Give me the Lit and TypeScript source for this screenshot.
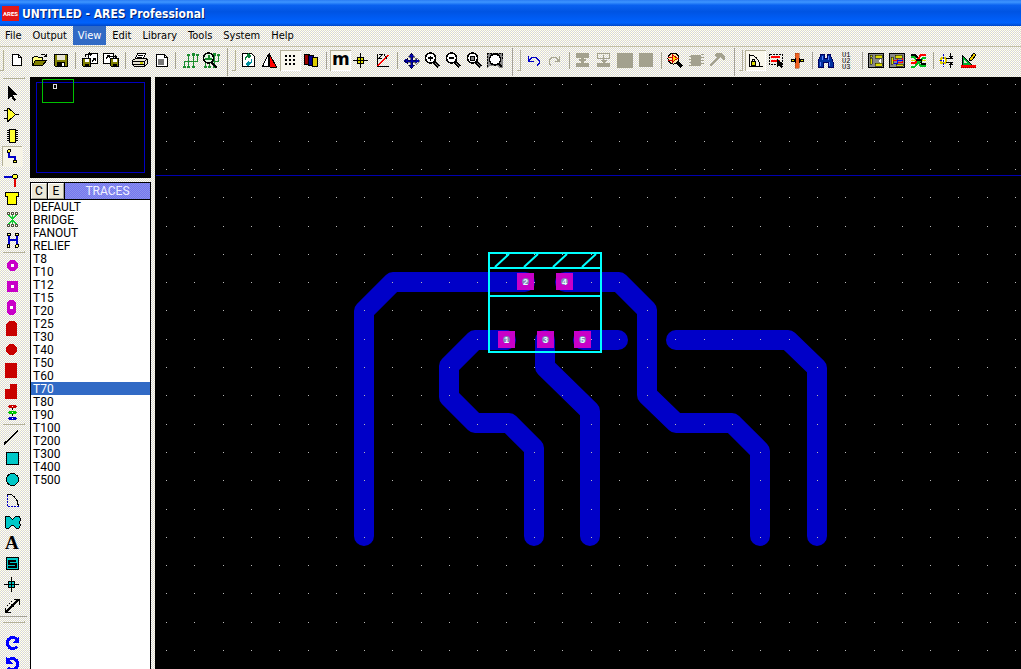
import { LitElement, html, css, svg, TemplateResult, SVGTemplateResult } from "lit";
import { customElement, property, state } from "lit/decorators.js";
import { classMap } from "lit/directives/class-map.js";

type Shape = SVGTemplateResult;
interface Tool { name: string; art: Shape; on?: boolean }

const K = "#000";
const OLIVE = "#808000";

const zoomLens = (mark: Shape): Shape => svg`
  <path d="M12 12l5 5" stroke="${K}" stroke-width="3"/><path d="M13 13l4 4" stroke="#888" stroke-width="1"/>
  <circle cx="8.500" cy="8" r="5" fill="#fff" stroke="${K}" stroke-width="1.500"/>${mark}`;

const floppy = (x: number, y: number): Shape => svg`
  <path d="M${x} ${y}h8v8h-7l-1-1z" fill="${OLIVE}" stroke="${K}"/>
  <path d="M${x + 2} ${y}h4v3h-4z" fill="#fff"/><path d="M${x + 2} ${y + 5}h4v3h-4z" fill="${K}"/>`;

const fileTools: Tool[] = [
  { name: "New", art: svg`<path d="M4.500 4.500h6l3 3v8h-9z" fill="#fff" stroke="${K}"/><path d="M10.500 4.500v3h3" fill="none" stroke="${K}"/>` },
  { name: "Open", art: svg`<path d="M3.500 15.500v-8h1l1-1h3l1 1h4v3" fill="#ffff80" stroke="${K}"/><path d="M3.500 15.500l3-5h11l-4 5z" fill="${OLIVE}" stroke="${K}"/><path d="M11.500 5.500l1-1h3l2 2m0-3v3h-3" fill="none" stroke="${K}"/>` },
  { name: "Save", art: svg`<path d="M4.500 4.500h13v12h-12l-1-1z" fill="${OLIVE}" stroke="${K}"/><path d="M7 5h8v5h-8z" fill="#e8e4d4"/><path d="M7 12h8v4h-8z" fill="${K}"/><path d="M12 13h2v3h-2z" fill="#fff"/>` },
];
const regionTools: Tool[] = [
  { name: "Import region", art: svg`<path d="M9.500 3.500h9v10h-9z" fill="#fff" stroke="${K}"/>${floppy(3.5, 8.5)}<path d="M6.500 7v-2.500h6m-2-2l2 2-2 2M13 11.500l3-3m-2 0h2v2" fill="none" stroke="${K}"/>` },
  { name: "Export region", art: svg`<path d="M3.500 3.500h10v10h-10z" fill="#fff" stroke="${K}"/>${floppy(10.5, 8.5)}<path d="M6 8.500l3-3m-2 0h2v2M10 6.500h5v2m0-3l2 2" fill="none" stroke="${K}"/>` },
];
const printTools: Tool[] = [
  { name: "Print", art: svg`<path d="M6.500 8.500l2-5h8l-2 5z" fill="#fff" stroke="${K}"/><path d="M9 5.500h5M8 7.500h5" stroke="${K}"/><path d="M3.500 10.500l3-2h10l2 1v4l-3 3h-10l-2-2z" fill="#e8e4d4" stroke="${K}"/><path d="M4 11.500h11l3-2M4 14.500h11v2M15.500 11v4" fill="none" stroke="${K}"/><path d="M11 13h3" stroke="#cc0" stroke-width="2"/>` },
  { name: "Print area", art: svg`<path d="M6.500 4.500h8l3 3v9h-11z" fill="#fff" stroke="${K}"/><path d="M14.500 4.500v3h3" fill="none" stroke="${K}"/><path d="M8 9h6v6h-6z" fill="#777"/>` },
];
const tree = svg`<path d="M5.500 17v-6h13M5.500 12v-1M9.500 11v6M14.500 4v13M9.500 5v6M18.500 5v6" fill="none" stroke="#1a8c2e"/><path d="M4 16h3v2h-3zM8 16h3v2h-3zM13 16h3v2h-3zM13 3h3v3h-3zM8 4h3v2h-3zM17 4h3v2h-3z" fill="#1a8c2e"/>`;
const netTools: Tool[] = [
  { name: "Netlist", art: tree },
  { name: "Find net", art: svg`<g>${tree}</g><path d="M11 12l6 6" stroke="${K}" stroke-width="2"/><circle cx="8.500" cy="8" r="5" fill="#dff5df" stroke="${K}" stroke-width="1.500"/><path d="M5 8.500h7M8.500 5v3" stroke="#1a8c2e" stroke-width="2"/>` },
];
const viewTools: Tool[] = [
  { name: "Redraw", art: svg`<path d="M4.500 3.500h9l3 3v10h-12z" fill="#fff" stroke="${K}"/><path d="M7.500 10v-2l2-2h2M10 4l2 2-2 2" fill="none" stroke="#08803a" stroke-width="1.500"/><path d="M13.500 9v3l-2 2h-2M11 12l-2 2 2 2" fill="none" stroke="#0090a0" stroke-width="1.500"/>` },
  { name: "Flip", art: svg`<path d="M9.500 4v12.500h-6z" fill="#fff" stroke="${K}"/><path d="M11 5v12h6z" fill="#f00"/><path d="M10.500 3v14M11 5l6.500 12h-7" fill="none" stroke="${K}"/>` },
  { name: "Grid", on: true, art: svg`<path d="M5 5h2v2h-2zM9 5h2v2h-2zM13 5h2v2h-2zM5 9h2v2h-2zM9 9h2v2h-2zM13 9h2v2h-2zM5 13h2v2h-2zM9 13h2v2h-2zM13 13h2v2h-2z" fill="${K}"/>` },
  { name: "Layers", art: svg`<path d="M3.500 4.500h5v10h-5z" fill="#900" stroke="${K}"/><path d="M7.500 5.500h5v10h-5z" fill="#00008c" stroke="${K}"/><path d="M11.500 7.500h5v9h-5z" fill="#dc0" stroke="${K}"/>` },
];
const unitTools: Tool[] = [
  { name: "Metric", on: true, art: svg`<text x="2" y="15" class="metric">m</text>` },
  { name: "Origin", art: svg`<path d="M9.500 3v15M2 10.500h15" stroke="${K}"/><path d="M6.500 7.500h6v6h-6z" fill="#dd0" stroke="${K}"/><path d="M9.500 7v7M6 10.500h7" stroke="${K}"/>` },
  { name: "Polar", art: svg`<path d="M5.500 4v12.500h11" fill="none" stroke="${K}"/><path d="M6 16l10-11" stroke="#f00" stroke-width="1.500"/><path d="M7 4.500h3l-3 4h3M12 4.500l3 4" fill="none" stroke="${K}"/>` },
];
const zoomTools: Tool[] = [
  { name: "Pan", art: svg`<path d="M10.500 3l3 4h-2v3h3v-2l4 3-4 3v-2h-3v3h2l-3 4-3-4h2v-3h-3v2l-4-3 4-3v2h3v-3h-2z" fill="#0000a8" stroke="${K}" stroke-width=".5"/>` },
  { name: "Zoom in", art: zoomLens(svg`<path d="M6 8h5M8.500 5.500v5" stroke="${K}" stroke-width="1.500"/>`) },
  { name: "Zoom out", art: zoomLens(svg`<path d="M6 8h5" stroke="${K}" stroke-width="2"/>`) },
  { name: "Zoom all", art: zoomLens(svg`<path d="M6.500 6h4v4h-4z" fill="#888" stroke="${K}"/>`) },
  { name: "Zoom area", art: svg`<path d="M2 3h16v15h-4l-2-2h-7l-3 2z" fill="#888"/><path d="M2 3.500h16M2.500 3v14M17.500 4v6" stroke="${K}" stroke-dasharray="2 1" fill="none"/><path d="M13 13l4 4" stroke="${K}" stroke-width="2"/><circle cx="10" cy="9.500" r="5.500" fill="#fff" stroke="${K}" stroke-width="1.500"/>` },
];
const undoTools: Tool[] = [
  { name: "Undo", art: svg`<path d="M5.500 6v5h5M6 10.500l3-3h4l3 3v3l-2 2" fill="none" stroke="#0000c8"/><path d="M5 8h1v3h3v1h-4z" fill="#0000c8"/>` },
  { name: "Redo", art: svg`<path d="M15.500 6v5h-5M15 10.500l-3-3h-4l-3 3v3l2 2" fill="none" stroke="#a8a694"/><path d="M13 11h3v-3h-1v2h-2z" fill="#a8a694"/>` },
];
const G = "#a3a18e";
const blockTools: Tool[] = [
  { name: "Block copy", art: svg`<path d="M3 3h13v5h-5v5h5v4h-13v-4h5v-5h-5z" fill="${G}"/><path d="M6 10h7" stroke="${G}" stroke-width="2"/>` },
  { name: "Block move", art: svg`<path d="M3.500 3.500h12v5h-12z" fill="none" stroke="${G}"/><path d="M9 5h1v5h3l-3 3h6v4h-13v-4h6l-3-3h3z" fill="${G}"/>` },
  { name: "Block rotate", art: svg`<path d="M2 3h16v15h-16z" fill="${G}"/>` },
  { name: "Block delete", art: svg`<path d="M3 3h14v14h-14z" fill="${G}"/>` },
];
const pickTools: Tool[] = [
  { name: "Pick parts", art: svg`<path d="M12 12l5 5" stroke="${K}" stroke-width="3"/><circle cx="8.500" cy="8.500" r="5.500" fill="#ffe8a0" stroke="${K}"/><path d="M7.500 5v7l5-3.500z" fill="#fd0" stroke="#c00"/><path d="M3 7.500h4M3 10.500h4M12 8.500h2" stroke="#c00"/>` },
  { name: "Make package", art: svg`<path d="M5 5h10v11h-10zM3 6h2v1h-2zM3 9h2v1h-2zM3 12h2v1h-2zM3 15h2v1h-2zM15 4h3v1h-3zM15 7h3v1h-3zM15 10h3v1h-3zM15 13h3v1h-3z" fill="${G}"/>` },
  { name: "Decompose", art: svg`<path d="M3 16l9-9" stroke="${G}" stroke-width="2"/><path d="M7 4l3-1h4l4 4v3h-2l-3-3-3 1-2-3z" fill="${G}"/>` },
];
const lockTools: Tool[] = [
  { name: "Trace angle lock", on: true, art: svg`<path d="M4.500 4v12.500h13M5 5.500h3l3 2 3 4 1 5" fill="none" stroke="${K}"/><path d="M6.500 11.500h4v4h-4z" fill="#dd0" stroke="${K}"/><path d="M7.500 11v-2h2v2" fill="none" stroke="${K}"/>` },
  { name: "Trace style", art: svg`<path d="M3.500 4.500h13v10h-13z" fill="none" stroke="${K}" stroke-dasharray="2 1"/><path d="M5 6h9v2h-9zM5 10h9v2h-9z" fill="#f00"/><path d="M11 9v8l2-2 2 3 2-1-2-3h3z" fill="${K}"/>` },
  { name: "Auto neck", art: svg`<path d="M8 3h4v15h-4z" fill="#f06020" stroke="#a04010" stroke-width=".5"/><path d="M4 9.500h3v2h-3zM13 9.500h3v2h-3z" fill="#dd0" stroke="${K}"/><path d="M8 8v5M12 8v5" stroke="${K}"/>` },
];
const searchTools: Tool[] = [
  { name: "Search", art: svg`<path d="M5 4h3v4h3v-4h3l3 8v5h-5v-5h-5v5h-5v-5z" fill="#0030a0" stroke="#000060"/><path d="M4 12v4M13 12v4M6 6v4M12 6v4" stroke="#6080ff"/>` },
  { name: "Annotate", art: svg`<g class="tiny"><text x="5" y="7">U1</text><text x="5" y="13">U2</text><text x="5" y="19">U3</text></g>` },
];
const board = svg`<path d="M2.500 3.500h15v14h-15z" fill="#888" stroke="${K}"/>`;
const routeTools: Tool[] = [
  { name: "Auto placer", art: svg`${board}<path d="M4 5h2v2h-2zM4 8h2v6h-2zM9 5h7v3h-7zM9 13h7v3h-7z" fill="#dd0" stroke="${K}" stroke-width=".5"/><path d="M12 11l3-2v4z" fill="#fff"/>` },
  { name: "Auto router", art: svg`${board}<path d="M4 7h2v7h-2zM8 5h7v3h-7zM9 14h7v2h-7z" fill="#dd0" stroke="${K}" stroke-width=".5"/><path d="M6 10.500h4v-2M10 12.500h5v-5" fill="none" stroke="#f00"/><path d="M7 13.500h3v-3h6" fill="none" stroke="#00f"/>` },
  { name: "Connectivity", art: svg`<path d="M3 4.500h4l7 9h4" fill="none" stroke="${K}" stroke-width="2"/><path d="M3 7h3l7 9h5" fill="none" stroke="#00c020" stroke-width="2"/><path d="M3 13h4l6-8h5" fill="none" stroke="#f00" stroke-width="2"/><path d="M3 16.500h4l8-9h3" fill="none" stroke="#00c020" stroke-width="2"/><path d="M3 10.500h5M13 10.500h5" stroke="#dd0"/><path d="M8 10h6" stroke="${K}" stroke-width="2"/>` },
];
const checkTools: Tool[] = [
  { name: "Design rules", art: svg`<circle cx="6.500" cy="10.500" r="3" fill="#fff" stroke="#dc0" stroke-width="2"/><path d="M6.500 4v13M3 10.500h3" stroke="#0000c8" stroke-dasharray="2 1"/><path d="M9 8.500h7M9 12.500h7M13.500 3v5M13.500 13v5" stroke="${K}"/><path d="M11 6h5l-2.500 2.500zM11 15h5l-2.500-2.500z" fill="${K}"/>` },
  { name: "Edit layout", art: svg`<path d="M4 5v10h10z" fill="#00b030" stroke="${K}"/><path d="M6 10v3h3z" fill="#e8e4d4"/><path d="M11 11l1-3 4-5 2 2-4 5z" fill="#ec0" stroke="${K}"/><path d="M3 15h15v3h-15z" fill="#f00"/><path d="M3 17.500h15" stroke="#900" stroke-dasharray="1 1"/>` },
];

const bands: Tool[][][] = [
  [fileTools, regionTools, printTools, netTools],
  [viewTools, unitTools, zoomTools],
  [undoTools, blockTools, pickTools],
  [lockTools, searchTools, routeTools, checkTools],
];

const M = "#c800c8";
const R = "#c80000";
const C = "#00c8c8";
const hole = svg`<path d="M11 9h3v3h-3z" fill="#fff"/>`;
const modes: Tool[][] = [
  [
    { name: "Selection", art: svg`<path d="M8 3v13l3-3 3 5 2-1-3-5h4z" fill="${K}"/>` },
    { name: "Component", art: svg`<path d="M7.500 4v13h1l7-6.500-7-6.500z" fill="#ff3" stroke="${K}"/><path d="M4 6.500h3M4 14.500h3M15 10.500h4" stroke="${K}"/>` },
    { name: "Package", art: svg`<path d="M7 5.500h2M7 7.500h2M7 9.500h2M7 11.500h2M7 13.500h2M7 15.500h2M16 5.500h2M16 7.500h2M16 9.500h2M16 11.500h2M16 13.500h2M16 15.500h2" stroke="${K}"/><path d="M9.500 4.500h6v13h-6z" fill="#ff3" stroke="${K}"/>` },
    { name: "Track", on: true, art: svg`<path d="M9 6v5h6v4" fill="none" stroke="#0000c8" stroke-width="2"/><circle cx="9" cy="5" r="1.500" fill="#ff3" stroke="${K}"/><circle cx="15" cy="15.500" r="1.500" fill="#ff3" stroke="${K}"/>` },
    { name: "Via", art: svg`<path d="M4 10h9" stroke="#0000c8" stroke-width="2"/><path d="M15 12v8" stroke="#e00000" stroke-width="2"/><circle cx="15" cy="9.500" r="2.500" fill="#ff3" stroke="${K}"/>` },
    { name: "Zone", art: svg`<path d="M5.500 4.500h13v4h-2v8h-9v-8h-2z" fill="#ff0" stroke="${K}"/>` },
    { name: "Ratsnest", art: svg`<path d="M8 5l4.500 5 4.500-5M8 16l4.500-5 4.500 5M12.500 5v11" stroke="#1c3" stroke-width="1.500"/><path d="M7 3h3v3h-3zM11 3h3v3h-3zM15 3h3v3h-3zM7 15h3v3h-3zM11 15h3v3h-3zM15 15h3v3h-3z" fill="#554"/><path d="M8 4h1v1h-1zM12 4h1v1h-1zM16 4h1v1h-1zM8 16h1v1h-1zM12 16h1v1h-1zM16 16h1v1h-1z" fill="#fff"/>` },
    { name: "Highlight", art: svg`<path d="M9 5v11M17 5v11M9 10h8" fill="none" stroke="#0000c8" stroke-width="2"/><circle cx="9" cy="4.500" r="1.500" fill="#ff8" stroke="${K}"/><circle cx="17" cy="4.500" r="1.500" fill="#ff8" stroke="${K}"/><circle cx="8.500" cy="16" r="1.500" fill="#ff8" stroke="${K}"/><circle cx="17" cy="16" r="1.500" fill="#ff8" stroke="${K}"/>` },
  ],
  [
    { name: "Round pad", art: svg`<circle cx="12.500" cy="10.500" r="5.500" fill="${M}"/>${hole}` },
    { name: "Square pad", art: svg`<path d="M7 5h11v11h-11z" fill="${M}"/>${hole}` },
    { name: "Oval pad", art: svg`<rect x="7" y="3" width="9" height="15" rx="4" fill="${M}"/><path d="M10 9h3v3h-3z" fill="#fff"/>` },
    { name: "Edge pad", art: svg`<path d="M6 18v-12l3-3h5l3 3v12z" fill="${R}"/>` },
    { name: "SMD round", art: svg`<circle cx="11.500" cy="10.500" r="5.500" fill="${R}"/>` },
    { name: "SMD rectangle", art: svg`<path d="M5 3h12v15h-12z" fill="${R}"/>` },
    { name: "SMD polygon", art: svg`<path d="M5 8h5v-5h7v15h-12z" fill="${R}"/>` },
    { name: "Padstack", art: svg`<path d="M12.500 3v14" stroke="${K}" stroke-dasharray="2 1"/><ellipse cx="12.500" cy="4.500" rx="4.500" ry="1.500" fill="${R}"/><ellipse cx="12.500" cy="10.500" rx="4.500" ry="1.500" fill="#00c800"/><ellipse cx="12.500" cy="16.500" rx="4.500" ry="1.500" fill="#0000c8"/><path d="M12 4.500h1M12 10.500h1M12 16.500h1" stroke="#fff"/>` },
  ],
  [
    { name: "Line", art: svg`<path d="M4 17L18 3.500" stroke="${K}" stroke-width="1.500"/>` },
    { name: "Box", art: svg`<path d="M6.500 4.500h12v12h-12z" fill="${C}" stroke="${K}"/>` },
    { name: "Circle", art: svg`<circle cx="12.500" cy="10.500" r="6" fill="${C}" stroke="${K}"/>` },
    { name: "Arc", art: svg`<path d="M7.500 5v11.500h11" fill="none" stroke="#0000c8" stroke-dasharray="2 1"/><path d="M7 4.500h4l3 2 3 4 1.500 6" fill="none" stroke="${K}"/>` },
    { name: "Path", art: svg`<path d="M6 5h3l3 3h1l3-3h3l1 2v3l-1 1 1 2v2l-1 2h-3l-3-3h-1l-3 3h-3l-1-2v-2l1-2-1-1v-3z" fill="${C}" stroke="${K}"/>` },
    { name: "Text", art: svg`<text x="5" y="17" class="serif">A</text>` },
    { name: "Symbol", art: svg`<path d="M6.500 4.500h12v12h-12z" fill="${C}" stroke="${K}"/><path d="M16 7.500h-7v3h7v3.500h-8" fill="none" stroke="${K}" stroke-width="2"/>` },
    { name: "Marker", art: svg`<path d="M8.500 7.500h6v6h-6z" fill="${C}" stroke="${K}"/><path d="M11.500 3v15M4 10.500h15" stroke="${K}"/>` },
    { name: "Dimension", art: svg`<path d="M5.500 17.500l13-13" stroke="${K}" stroke-width="1.500"/><path d="M5.500 13v4.500h5M14 4.500h5v5" fill="none" stroke="${K}"/><path d="M11 9h3v3h-3z" fill="${K}"/><path d="M7 11l5-5" stroke="${K}" stroke-dasharray="1 2"/>` },
  ],
];
const rotates: Tool[] = [
  { name: "Rotate clockwise", art: svg`<path d="M17 14.500a5.500 5.500 0 1 1-.500-7.500" fill="none" stroke="#00f" stroke-width="3"/><path d="M19 4v7h-7z" fill="#00f"/>` },
  { name: "Rotate anticlockwise", art: svg`<path d="M8 14.500a5.500 5.500 0 1 0 .500-7.500" fill="none" stroke="#00f" stroke-width="3"/><path d="M6 4v7h7z" fill="#00f"/>` },
];

const iconStyles = css`
  button { font: inherit; padding: 0; margin: 0; border: 0; background: none; color: inherit; }
  .tool { display: block; flex: none; width: 21px; height: 21px; }
  .tool.on { background: #f9f7ec; box-shadow: inset 1px 1px #b4b197, inset -1px -1px #fff; }
  .tool svg { display: block; width: 21px; height: 21px; overflow: visible; shape-rendering: crispEdges; }
  .tool text { fill: #000; }
  .metric { font: bold 17px "DejaVu Sans", sans-serif; }
  .serif { font: bold 19px "Liberation Serif", serif; }
  .tiny { font: 7px "Liberation Mono", monospace; }
`;

const toolButton = (t: Tool): TemplateResult => html`
  <button class=${classMap({ tool: true, on: !!t.on })} title=${t.name} aria-label=${t.name}>
    <svg viewBox="0 0 21 21" fill="none">${t.art}</svg>
  </button>`;

@customElement("ares-toolbar")
class AresToolbar extends LitElement {
  static styles = [iconStyles, css`
    :host { display: flex; height: 31px; box-sizing: border-box; padding-top: 3px; border-top: 1px solid #c3c0a4; overflow: hidden; }
    .band { display: flex; flex: none; height: 21px; }
    .band + .band::before { content: ""; width: 5px; margin: -2px 0 -5px 6px; border-left: 1px solid #a5a294; box-sizing: border-box; }
    .grip { width: 4px; margin-right: 2px; border-right: 1px solid #b4b197; border-bottom: 1px solid #b4b197; box-sizing: border-box; }
    .band:first-child .grip { margin-right: 4px; }
    .group { display: flex; }
    .group + .group::before { content: ""; width: 1px; margin: 2px 3px 2px 4px; background: #a5a294; }
  `];
  render() {
    return html`${bands.map((b) => html`
      <div class="band" role="toolbar"><span class="grip"></span>
        ${b.map((g) => html`<div class="group">${g.map(toolButton)}</div>`)}
      </div>`)}`;
  }
}

@customElement("ares-modes")
class AresModes extends LitElement {
  static styles = [iconStyles, css`
    :host { display: block; width: 30px; overflow: hidden; }
    .rule { height: 2px; width: 22px; margin-left: 3px; border-bottom: 1px solid #b4b197; border-right: 1px solid #b4b197; box-sizing: border-box; }
    .top { margin-bottom: 4px; }
    .mid { margin-bottom: 2px; height: 2px; }
    .tool { width: 24px; }
    .tool.on { background: linear-gradient(#f6f4e6, #f6f4e6) no-repeat 3px 1px / 20px 20px, linear-gradient(#b4b197, #b4b197) no-repeat 2px 0 / 20px 20px; box-shadow: none; }
    .split { border-top: 1px solid #a5a294; height: 16px; box-sizing: border-box; margin-right: 3px; padding-top: 4px; }
  `];
  render() {
    return html`
      <div class="rule top"></div>
      ${modes.map((g, i) => html`
        ${i ? html`<div class="rule mid"></div>` : ""}
        <div class="group">${g.map(toolButton)}</div>`)}
      <div class="split"><div class="rule"></div></div>
      <div class="group">${rotates.map(toolButton)}</div>`;
  }
}

@customElement("ares-picker")
class AresPicker extends LitElement {
  @state() selected = "T70";
  @property({ type: Array }) items = ["DEFAULT", "BRIDGE", "FANOUT", "RELIEF", "T8", "T10", "T12", "T15", "T20", "T25", "T30",
    "T40", "T50", "T60", "T70", "T80", "T90", "T100", "T200", "T300", "T400", "T500"];
  static styles = css`
    :host { display: flex; flex-direction: column; gap: 4px; width: 121px; font: 12px/13px Roboto, sans-serif; }
    .overview { display: block; width: 121px; height: 101px; background: #000; shape-rendering: crispEdges; }
    .box { flex: 1; border: 1px solid #000; border-bottom: 0; background: #fff; }
    .head { display: flex; height: 16px; border-bottom: 1px solid #000; background: #000; gap: 1px; }
    .head button { width: 16px; padding: 0; border: 1px solid; border-color: #fff #a5a294 #a5a294 #fff; background: #ece9d8; color: #000; font: inherit; line-height: 13px; }
    .title { flex: 1; background: conic-gradient(#7474f0 25%, #8c94ec 0 50%, #7474f0 0 75%, #8c94ec 0) 0 0 / 2px 2px; color: #f0f0ff; line-height: 16px; text-align: center; }
    ul { list-style: none; margin: 0; padding: 0; }
    li { padding-left: 2px; height: 13px; line-height: 15px; }
    li.sel { background: #316ac5; color: #fff; }
  `;
  render() {
    return html`
      <svg class="overview" viewBox="0 0 121 101" fill="none">
        <rect x="6.500" y="5.500" width="108" height="90" stroke="#0000c0"/>
        <rect x="12.500" y="2.500" width="31" height="23" stroke="#00c000"/>
        <rect x="23.500" y="7.500" width="3" height="4" stroke="#ddd"/>
      </svg>
      <div class="box">
        <div class="head"><button>C</button><button>E</button><div class="title">TRACES</div></div>
        <ul role="listbox" aria-label="Traces">
          ${this.items.map((t) => html`<li role="option" aria-selected=${t === this.selected ? "true" : "false"}
            class=${classMap({ sel: t === this.selected })} @click=${() => (this.selected = t)}>${t}</li>`)}
        </ul>
      </div>`;
  }
}

const tracks = [
  "525,282 393,282 364,311 364,536",
  "565,282 619,282 647,310 647,395 676,423 732,423 760,451 760,536",
  "506,340 475,340 449,366 449,397 475,423 509,423 534,448 534,536",
  "545,340 545,367 590,411 590,536",
  "583,340 618,340",
  "676,340 788,340 817,368 817,536",
];
const pads: [string, number, number][] = [["2", 517, 273], ["4", 556, 273], ["1", 498, 331], ["3", 537, 331], ["5", 574, 331]];
const columns = Array.from({ length: 90 }, (_, i) => Math.round(166 + 28.3 * i));
const rows = Array.from({ length: 50 }, (_, i) => Math.round(84 + 28.3 * i));

@customElement("ares-board")
class AresBoard extends LitElement {
  static styles = css`
    :host { display: block; background: #000; overflow: hidden; min-width: 0; contain: size; }
    svg { display: block; width: 100%; height: 100%; }
    .track { fill: none; stroke: #0000c8; stroke-width: 20px; stroke-linecap: round; stroke-linejoin: round; }
    .outline { fill: none; stroke: #0ff; stroke-width: 2px; }
    .pad { fill: #c800c8; }
    .sharp { shape-rendering: crispEdges; }
    .pin { font: bold 9px "Liberation Sans", sans-serif; fill: #e0ffff; text-anchor: middle; }
  `;
  render() {
    return html`<svg><g transform="translate(-155 -77)">
      <path class="sharp" d="M156 175.500H4000" stroke="#0000b0"/>
      ${tracks.map((p) => svg`<polyline class="track" points=${p}/>`)}
      ${pads.map(([n, x, y]) => svg`<rect class="pad sharp" x=${x} y=${y} width="17" height="17"/>
        <circle cx=${x + 8.5} cy=${y + 8.5} r="3.500" fill="#8484b8"/>
        <text class="pin" x=${x + 8.5} y=${y + 12}>${n}</text>`)}
      <path class="sharp" fill="#b8b8b8" d=${columns.map((x) => rows.map((y) => `M${x} ${y}h1v1h-1z`).join("")).join("")}/>
      <path class="outline sharp" d="M489 253h112v99h-112zM489 268h112M489 296h112"/>
      <path class="outline" d="M495 267l14-13M524 267l14-13M553 267l14-13M582 267l14-13"/>
    </g></svg>`;
  }
}

@customElement("app-root")
class AppRoot extends LitElement {
  @state() open = "View";
  static styles = css`
    :host { display: flex; flex-direction: column; height: 100vh; overflow: hidden; color: #000;
      background: conic-gradient(#d8d6d6 25%, #fff 0 50%, #dcdad6 0 75%, #ffffe8 0) 0 0 / 2px 2px; }
    .titlebar { display: flex; align-items: center; gap: 3px; height: 26px; padding-left: 2px; color: #fff;
      background: linear-gradient(#2a7cf4, #3d95ff 8%, #0a62f0 20%, #0054e3 45%, #005cf4 70%, #0062fc 88%, #0046c8);
      font: bold 12px/24px "DejaVu Sans Condensed", sans-serif; text-shadow: 1px 1px #00206c; box-sizing: border-box; padding-top: 1px; }
    .logo { width: 17px; height: 15px; background: #e01818; font: bold 6px/15px Roboto, sans-serif; text-align: center; text-shadow: none; }
    .menu { display: flex; gap: 1px; height: 20px; }
    .menu button { border: 0; margin: 0; padding: 0 5px; background: none; color: inherit; height: 19px; font: 11px/19px "DejaVu Sans Condensed", sans-serif; }
    .menu button.on { background: #316ac5; color: #fff; }
    .work { flex: 1; min-height: 0; display: grid; grid-template-columns: 30px 121px 1fr; }
    ares-modes, ares-picker { min-height: 0; }
    ares-board { margin-left: 4px; }
  `;
  render() {
    const menus = ["File", "Output", "View", "Edit", "Library", "Tools", "System", "Help"];
    return html`
      <header class="titlebar"><span class="logo">ARES</span><span>UNTITLED - ARES Professional</span></header>
      <nav class="menu">${menus.map((m) => html`<button class=${classMap({ on: m === this.open })} @click=${() => (this.open = m)}>${m}</button>`)}</nav>
      <ares-toolbar></ares-toolbar>
      <main class="work"><ares-modes></ares-modes><ares-picker></ares-picker><ares-board></ares-board></main>`;
  }
}
